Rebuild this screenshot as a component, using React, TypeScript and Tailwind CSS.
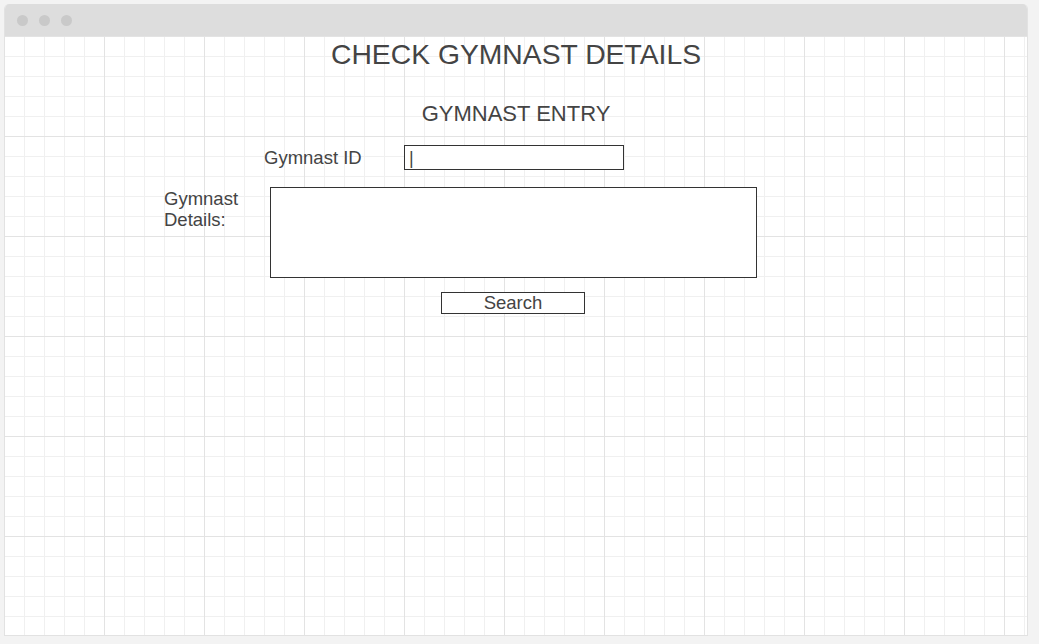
export default function App() {
  return (
    <div className="h-[644px] w-[1039px] bg-[#f3f3f3] p-[4px] pr-[11px] pb-[8px] font-['Liberation_Sans',Arial,sans-serif] text-[#444]">
      <div className="flex h-full flex-col overflow-hidden rounded-t-[5px] border border-t-0 border-[#e2e2e2] bg-white">
        <div className="flex h-[32px] shrink-0 items-center gap-[11px] bg-[#dddddd] pl-[12px]">
          <span className="h-[11px] w-[11px] rounded-full bg-[#c9c9c9]" />
          <span className="h-[11px] w-[11px] rounded-full bg-[#c9c9c9]" />
          <span className="h-[11px] w-[11px] rounded-full bg-[#c9c9c9]" />
        </div>
        <div className="flex-1 bg-[linear-gradient(to_right,#e3e3e3_1px,transparent_1px),linear-gradient(to_bottom,#e3e3e3_1px,transparent_1px),linear-gradient(to_right,#f0f0f0_1px,transparent_1px),linear-gradient(to_bottom,#f0f0f0_1px,transparent_1px)] bg-[size:100px_100px,100px_100px,20px_20px,20px_20px] bg-[position:-1px_0px]">
          <div className="flex flex-col">
            <h1 className="mt-[2px] text-center text-[28.3px] leading-[32px]">CHECK GYMNAST DETAILS</h1>
            <h2 className="mt-[32px] text-center text-[22px] leading-[24px]">GYMNAST ENTRY</h2>
            <div className="mt-[19px] flex items-center">
              <span className="ml-[259px] w-[140px] text-[18.5px] leading-[20px]">Gymnast ID</span>
              <div className="flex h-[25px] w-[220px] items-center border border-[#333] bg-white pl-[4px] text-[18px] leading-[20px]">|</div>
            </div>
            <div className="mt-[17px] flex items-start">
              <span className="ml-[159px] mt-[2px] w-[106px] text-[18.5px] leading-[20.5px]">
                Gymnast
                <br />
                Details:
              </span>
              <div className="h-[91px] w-[487px] border border-[#333] bg-white" />
            </div>
            <div className="mt-[14px] flex">
              <button className="ml-[436px] h-[22px] w-[144px] border border-[#333] bg-white text-[18.5px] leading-[20px] text-[#444]">
                Search
              </button>
            </div>
          </div>
        </div>
      </div>
    </div>
  );
}
